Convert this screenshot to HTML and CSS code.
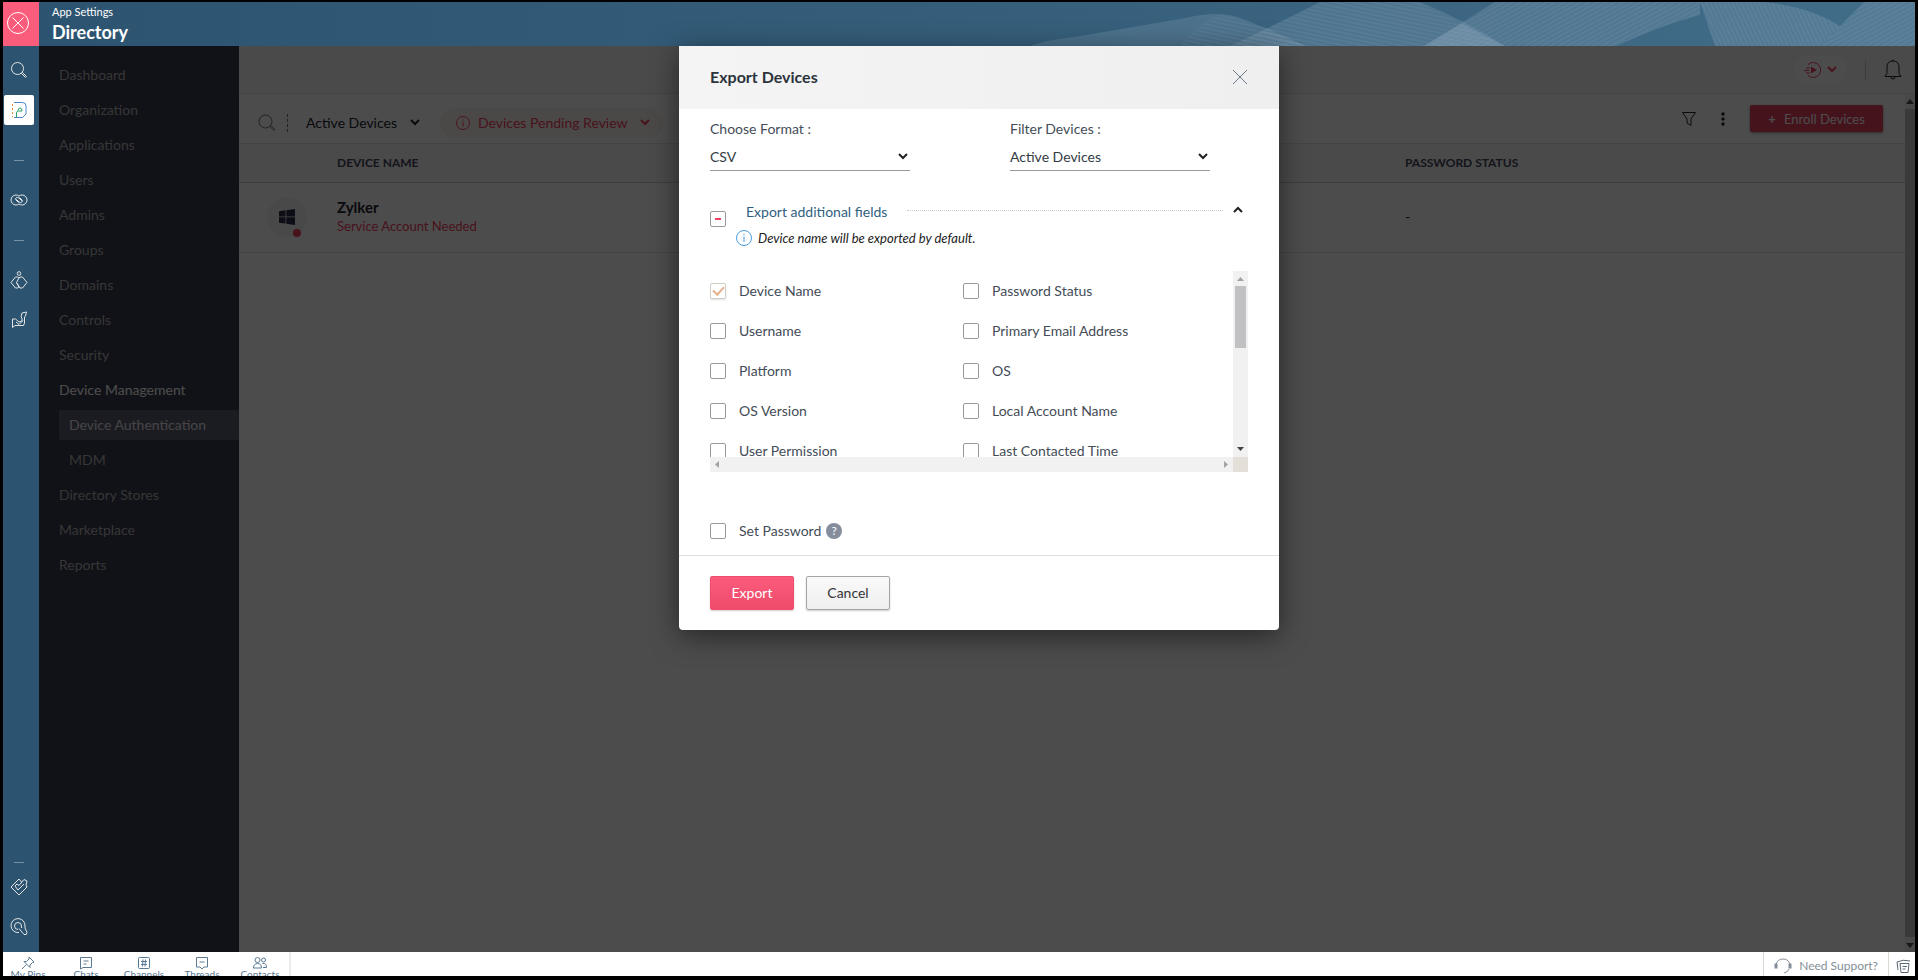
FILE: index.html
```
<!DOCTYPE html>
<html lang="en">

<head>
    <meta charset="UTF-8">
    <meta name="viewport" content="width=device-width, initial-scale=1.0">
    <title>Directory - App Settings</title>
    <link rel="stylesheet" href="styles.css">
</head>

<body>
    <header>
        <button id="close-settings" aria-label="Close settings">
            <svg width="24" height="24" viewBox="0 0 24 24"><circle cx="12" cy="12" r="10.5" /><path d="M6.5 6.5l11 11M17.5 6.5l-11 11" /></svg>
        </button>
        <div id="title">
            <span>App Settings</span>
            <h1>Directory</h1>
        </div>
        <svg id="waves" width="900" height="44" viewBox="0 0 900 44" aria-hidden="true">
            <defs>
                <pattern id="lines-a" width="4" height="4" patternUnits="userSpaceOnUse" patternTransform="rotate(12)">
                    <path d="M0 2h4" />
                </pattern>
                <pattern id="lines-b" width="4" height="4" patternUnits="userSpaceOnUse" patternTransform="rotate(-28)">
                    <path d="M0 2h4" />
                </pattern>
                <pattern id="lines-c" width="4" height="4" patternUnits="userSpaceOnUse" patternTransform="rotate(65)">
                    <path d="M0 2h4" />
                </pattern>
            </defs>
            <g class="wave">
                <path d="M15 44Q30 38 60 35L170 16Q205 8 225 16Q255 27 290 44z" />
                <path d="M215 44Q270 18 305 0H405Q450 18 490 44z" />
                <path d="M409 44L480 0H685V13Q650 22 601 44z" />
                <path d="M685 0H750Q795 5 825 24L805 44H700z" />
                <path d="M805 44L849 0H900V44z" />
                <path d="M409 44L447 22L490 44z" />
            </g>
            <path d="M165 44Q185 20 205 13Q255 22 290 44z" fill="url(#lines-a)" />
            <path d="M215 44L305 0H405L490 44z" fill="url(#lines-a)" />
            <path d="M409 44L480 0H685V13Q650 22 601 44z" fill="url(#lines-b)" />
            <path d="M685 0H750Q795 5 825 24L805 44H700z" fill="url(#lines-c)" />
            <path d="M805 44L849 0H900V44z" fill="url(#lines-b)" />
        </svg>
    </header>

    <div id="workspace">
        <nav id="rail" aria-label="Apps">
            <a href="#" aria-label="Search"><svg width="18" height="18" viewBox="0 0 18 18"><circle cx="7.500" cy="7.500" r="6" /><path d="M11.500 12.500l1-1 4 4-1 1z" /></svg></a>
            <a href="#" class="current" aria-label="Directory">
                <svg width="18" height="18" viewBox="0 0 18 18"><path class="blue" d="M4 1.500h8.500q3.500 0 3.500 3.500v8l-3.500 3.500H4" /><path class="orange" d="M2.500 3v13" /><path class="green" d="M6.500 16v-4q0-2 2-2H12V9q-.5-2-2-2T8 9.500" /></svg>
            </a>
            <hr>
            <a href="#" aria-label="Links"><svg width="18" height="18" viewBox="0 0 18 18"><path d="M9 5Q7.500 4 6 4a5 5 0 0 0 0 10q1.500 0 3-1M9 5q1.500-1 3-1a5 5 0 0 1 0 10q-1.500 0-3-1" /><path d="M8.500 11.500L6 9q-1-1.500.3-2.300T9 7l3 3M9.500 6.500L12 9q1 1.500-.3 2.300T9 11L6.500 8.500" /></svg></a>
            <hr>
            <a href="#" aria-label="People"><svg width="18" height="18" viewBox="0 0 18 18"><circle cx="9" cy="2.500" r="1.800" /><path d="M9 7L7.500 6h-2L1 11.500 5.500 17h2L9 16M9 7L6.500 11.500 10 17h2.500L17 11.500 12.500 6H10zM9 16l-2.500-4.500" /></svg></a>
            <a href="#" aria-label="Campaigns"><svg width="18" height="18" viewBox="0 0 18 18"><path d="M2.500 16.500V8h3l3.500 3 3-1V7l-1-1 1-4 4.500-1-1 4-1 1v6l-1 2.500H5zM6 11l3 2.500 4-4" /></svg></a>
            <hr class="push">
            <a href="#" aria-label="Tasks"><svg width="18" height="18" viewBox="0 0 18 18"><path d="M11.500 4L9 1 1 9l8 8 8-8-1-2 1-4-3-1.500-5 6-2-1.500-2 2L8 12l6-6" /></svg></a>
            <a href="#" aria-label="Zia search"><svg width="18" height="18" viewBox="0 0 18 18"><path d="M9 14.500A7 7 0 1 1 15 8v2l2 4.500q0 3-3 2l-5-6" /><path d="M8 11.500A3.500 3.500 0 1 1 11.500 8v2" /></svg></a>
        </nav>

        <nav id="sidebar" aria-label="Directory">
            <a href="#">Dashboard</a>
            <a href="#">Organization</a>
            <a href="#">Applications</a>
            <a href="#">Users</a>
            <a href="#">Admins</a>
            <a href="#">Groups</a>
            <a href="#">Domains</a>
            <a href="#">Controls</a>
            <a href="#">Security</a>
            <a href="#" class="open">Device Management</a>
            <a href="#" class="sub active">Device Authentication</a>
            <a href="#" class="sub">MDM</a>
            <a href="#">Directory Stores</a>
            <a href="#">Marketplace</a>
            <a href="#">Reports</a>
        </nav>

        <main>
            <div id="topbar">
                <button class="quick" aria-label="Quick start">
                    <svg width="18" height="18" viewBox="0 0 18 18"><path d="M4 3.500a7.500 7.500 0 1 1 0 11M2 7h4M0 9.500h5M2 12h4" /><path class="solid" d="M7 5.500l6 3.500-6 3.500z" /></svg>
                    <svg class="chevron" width="10" height="7" viewBox="0 0 10 7"><path d="M1 1l4 4 4-4" /></svg>
                </button>
                <span class="divider"></span>
                <button class="icon" aria-label="Notifications">
                    <svg width="18" height="21" viewBox="0 0 18 21"><path d="M9 .5v1.500M1 17.500l2-3V8q0-6 6-6t6 6v6.500l2 3zM7 18q0 2 2 2t2-2" /></svg>
                </button>
            </div>
            <div id="page">
                <div id="list">
                    <div id="toolbar">
                        <button class="icon search" aria-label="Search devices"><svg width="18" height="18" viewBox="0 0 18 18"><circle cx="7.500" cy="7.500" r="6.500" /><path d="M12 12.500l1-1 4 4-1 1z" /></svg></button>
                        <span class="dashes"></span>
                        <button class="view">Active Devices <svg class="chevron" width="10" height="7" viewBox="0 0 10 7"><path d="M1 1l4 4 4-4" /></svg></button>
                        <button class="pending">
                            <svg width="14" height="14" viewBox="0 0 14 14"><circle cx="7" cy="7" r="6.500" /><path d="M7 6v4.500M7 3.500v1.200" /></svg>
                            Devices Pending Review
                            <svg class="chevron" width="10" height="7" viewBox="0 0 10 7"><path d="M1 1l4 4 4-4" /></svg>
                        </button>
                        <div class="actions">
                            <button class="icon" aria-label="Filter"><svg width="14" height="14" viewBox="0 0 14 14"><path d="M.5 .5h13L9 7v6.500L5 11V7z" /></svg></button>
                            <button class="icon dots" aria-label="More"><svg width="4" height="14" viewBox="0 0 4 14"><circle cx="2" cy="2" r="1.700" /><circle cx="2" cy="7" r="1.700" /><circle cx="2" cy="12" r="1.700" /></svg></button>
                            <button class="enroll"><b>+</b> Enroll Devices</button>
                        </div>
                    </div>
                    <table>
                        <colgroup>
                            <col class="col-icon">
                            <col>
                            <col class="col-status">
                        </colgroup>
                        <thead>
                            <tr>
                                <th></th>
                                <th>DEVICE NAME</th>
                                <th>PASSWORD STATUS</th>
                            </tr>
                        </thead>
                        <tbody>
                            <tr>
                                <td>
                                    <span class="os">
                                        <svg width="16" height="16" viewBox="0 0 16 16"><path d="M0 2.200l6.500-.9v6.200H0zM7.300 1.200L16 0v7.500H7.300zM0 8.300h6.500v6.300L0 13.700zM7.300 8.300H16V16l-8.700-1.300z" /></svg>
                                    </span>
                                </td>
                                <td><strong>Zylker</strong><em>Service Account Needed</em></td>
                                <td>-</td>
                            </tr>
                        </tbody>
                    </table>
                </div>
                <div id="page-scroll" aria-hidden="true">
                    <svg width="10" height="15" viewBox="0 0 10 15"><path d="M1 10l4-5 4 5z" /></svg>
                    <span></span>
                    <svg width="10" height="15" viewBox="0 0 10 15"><path d="M1 6l4 5 4-5z" /></svg>
                </div>
            </div>
        </main>

        <div id="overlay">
            <form id="export" role="dialog" aria-labelledby="export-title">
                <div class="head">
                    <h2 id="export-title">Export Devices</h2>
                    <button type="button" aria-label="Close"><svg width="16" height="16" viewBox="0 0 16 16"><path d="M1 1l14 14M15 1L1 15" /></svg></button>
                </div>
                <div class="body">
                    <div class="selects">
                        <div class="field">
                            <label for="format">Choose Format :</label>
                            <select id="format"><option>CSV</option></select>
                            <svg class="chevron" width="10" height="7" viewBox="0 0 10 7"><path d="M1 1l4 4 4-4" /></svg>
                        </div>
                        <div class="field">
                            <label for="filter">Filter Devices :</label>
                            <select id="filter"><option>Active Devices</option></select>
                            <svg class="chevron" width="10" height="7" viewBox="0 0 10 7"><path d="M1 1l4 4 4-4" /></svg>
                        </div>
                    </div>

                    <div class="additional">
                        <input type="checkbox" id="all-fields" class="partial">
                        <div class="info">
                            <div class="line">
                                <label for="all-fields">Export additional fields</label>
                                <span class="rule"></span>
                                <button type="button" aria-label="Collapse"><svg class="chevron" width="10" height="7" viewBox="0 0 10 7"><path d="M1 6l4-4 4 4" /></svg></button>
                            </div>
                            <p><svg width="16" height="16" viewBox="0 0 16 16"><circle cx="8" cy="8" r="7.500" /><path d="M8 6.500v5.500M8 3.800v1.400" /></svg> Device name will be exported by default.</p>
                        </div>
                    </div>

                    <div class="scroller">
                        <div class="fields">
                            <label><input type="checkbox" checked disabled> Device Name</label>
                            <label><input type="checkbox"> Password Status</label>
                            <label><input type="checkbox"> Username</label>
                            <label><input type="checkbox"> Primary Email Address</label>
                            <label><input type="checkbox"> Platform</label>
                            <label><input type="checkbox"> OS</label>
                            <label><input type="checkbox"> OS Version</label>
                            <label><input type="checkbox"> Local Account Name</label>
                            <label><input type="checkbox"> User Permission</label>
                            <label><input type="checkbox"> Last Contacted Time</label>
                        </div>
                        <div class="bar-y" aria-hidden="true">
                            <svg width="9" height="15" viewBox="0 0 9 15"><path class="dim" d="M1 10l3.500-4L8 10z" /></svg>
                            <span></span>
                            <svg width="9" height="15" viewBox="0 0 9 15"><path d="M1 5l3.500 4L8 5z" /></svg>
                        </div>
                        <div class="bar-x" aria-hidden="true">
                            <svg width="15" height="9" viewBox="0 0 15 9"><path class="dim" d="M9 1L5 4.500 9 8z" /></svg>
                            <svg width="15" height="9" viewBox="0 0 15 9"><path class="dim" d="M6 1l4 3.500L6 8z" /></svg>
                        </div>
                        <div class="corner"></div>
                    </div>

                    <div class="password">
                        <label><input type="checkbox"> Set Password</label>
                        <button type="button" aria-label="Help">?</button>
                    </div>
                </div>
                <div class="foot">
                    <button type="submit" class="primary">Export</button>
                    <button type="button">Cancel</button>
                </div>
            </form>
        </div>
    </div>

    <footer>
        <nav aria-label="Chat">
            <a href="#"><svg width="14" height="14" viewBox="0 0 14 14"><path d="M8 1l5 5-1.500.5L9 9v2.500L3 5.500h2.500L8 3zM5.500 8.500L1 13" /></svg>My Pins</a>
            <a href="#"><svg width="14" height="14" viewBox="0 0 14 14"><path d="M1.500 1.500h11v10H4l-2.500 1.500zM4.500 5h5M4.500 8h3" /></svg>Chats</a>
            <a href="#"><svg width="14" height="14" viewBox="0 0 14 14"><rect x="1.500" y="1.500" width="11" height="11" rx="1" /><path d="M4 5.500h6M4 8.500h6M6 3.500l-.5 7M8.500 3.500l-.5 7" /></svg>Channels</a>
            <a href="#"><svg width="14" height="14" viewBox="0 0 14 14"><path d="M1.500 1.500h11v9.500H9L7 13l-2-2H1.500zM4.500 6h5" /></svg>Threads</a>
            <a href="#"><svg width="14" height="14" viewBox="0 0 14 14"><circle cx="4.500" cy="4" r="2.500" /><circle cx="10.500" cy="4" r="2" /><path d="M.5 12q0-4.500 4-4.500t4 4.500zM9.500 7.500q4-.5 4 4H10" /></svg>Contacts</a>
        </nav>
        <a href="#" class="support">
            <svg width="18" height="16" viewBox="0 0 18 16"><path d="M2 10V7q1-6 7-6t7 6v3M15 11q-1 3-5 4" /><path class="thick" d="M2 5.500v5M16 5.500v5" /></svg>
            Need Support?
        </a>
        <a href="#" class="notes" aria-label="Notes"><svg width="15" height="15" viewBox="0 0 15 15"><path d="M4 4.500h9l-1 9H5zM2 11L1 3q6-3 13-1M6.500 7.500h4.500M6.500 10h3" /></svg></a>
    </footer>
</body>

</html>
```
FILE: styles.css
```
:root {
    --blue: #2c5470;
    --red: #f2405f;
    --text: #444c57;
    --line: #e4e4e4;
}

* {
    box-sizing: border-box;
}

body {
    margin: 0;
    height: 100vh;
    padding: 2px 3px 4px;
    display: flex;
    flex-direction: column;
    background-color: #000;
    font-family: Lato, "Liberation Sans", sans-serif;
    font-size: 14px;
    line-height: 20px;
}

a {
    color: inherit;
    text-decoration: none;
}

button,
select,
input {
    margin: 0;
    font: inherit;
    color: inherit;
}

button {
    border: none;
    padding: 0;
    background: none;
    cursor: pointer;
}

svg {
    flex: none;
    display: block;
    fill: none;
    stroke: currentColor;
}

.chevron {
    stroke-width: 2;
}

/* header */

header {
    flex: none;
    display: flex;
    height: 44px;
    overflow: hidden;
    color: #fff;
    background: linear-gradient(to right, var(--blue), #365f7b 55%, #426d89);
}

#close-settings {
    width: 36px;
    flex: none;
    padding: 0 0 3px 3px;
    background-color: #fa5c7c;
}

#title {
    padding-left: 13px;
}

#title span {
    display: block;
    font-size: 11px;
    line-height: 20px;
}

#title h1 {
    margin: 0;
    font-size: 18px;
    line-height: 20px;
}

#waves {
    margin-left: auto;
    stroke: none;
}

#waves pattern {
    stroke: #9db4c4;
    stroke-opacity: 0.2;
}

.wave {
    fill: #8ca8ba;
    fill-opacity: 0.25;
}

/* workspace */

#workspace {
    position: relative;
    flex: 1;
    min-height: 0;
    display: flex;
}

#rail {
    width: 36px;
    flex: none;
    display: flex;
    flex-direction: column;
    align-items: center;
    padding: 4px 4px 5px 0;
    color: #e4e4e4;
    background-color: var(--blue);
}

#rail a {
    display: grid;
    place-items: center;
    width: 30px;
    height: 30px;
    margin: 5px 0;
}

#rail .current {
    border-radius: 2px;
    background-color: #fff;
}

#rail hr {
    width: 10px;
    margin: 20px 0 19px;
    border: none;
    border-top: 1px solid #7391a5;
}

#rail .current + hr {
    margin-top: 30px;
}

#rail hr.push {
    margin: auto 0 4px;
}

.blue {
    stroke: #4a86c5;
}

.orange {
    stroke: #e3873f;
    stroke-dasharray: 2 2;
}

.green {
    stroke: #25a465;
}

#sidebar {
    width: 200px;
    flex: none;
    display: flex;
    flex-direction: column;
    gap: 5px;
    padding: 14px 0 0 20px;
    line-height: 30px;
    color: #b4b4b4;
    background-color: #393c4d;
}

#sidebar .open {
    color: #fff;
}

#sidebar .sub {
    padding-left: 10px;
}

#sidebar .active {
    border-radius: 2px;
    color: #e6e6e6;
    background-color: #5c5c72;
}

main {
    flex: 1;
    min-width: 0;
    display: flex;
    flex-direction: column;
    color: #22222f;
    background-color: #fff;
}

#topbar {
    flex: none;
    height: 48px;
    display: flex;
    align-items: center;
    justify-content: flex-end;
    gap: 18px;
    padding-right: 13px;
    background-color: #f7f7f7;
    border-bottom: 1px solid var(--line);
}

.quick {
    width: 53px;
    height: 30px;
    display: flex;
    align-items: center;
    justify-content: center;
    gap: 5px;
    border-radius: 15px;
    color: var(--red);
    background-color: #fff;
}

.quick .solid {
    fill: currentColor;
    stroke: none;
}

.divider {
    width: 1px;
    height: 20px;
    background-color: #ccc;
}

#page {
    flex: 1;
    min-height: 0;
    display: flex;
}

#list {
    flex: 1;
}

#toolbar {
    height: 50px;
    display: flex;
    align-items: center;
    padding: 8px 22px 0 19px;
    border-bottom: 1px solid var(--line);
}

.search {
    color: #777;
}

.dashes {
    height: 18px;
    margin: 0 18px 0 11px;
    border-left: 1px dashed #777;
}

.view,
.pending {
    display: flex;
    align-items: center;
    height: 30px;
    white-space: nowrap;
}

.view {
    gap: 13px;
}

.pending {
    gap: 8px;
    margin-left: 20px;
    padding: 0 13px 0 16px;
    border-radius: 15px;
    color: var(--red);
    background-color: #fcf4ee;
}

.pending .chevron {
    margin-left: 4px;
}

.actions {
    display: flex;
    align-items: center;
    gap: 25px;
    margin: 0 0 8px auto;
}

.dots svg {
    fill: currentColor;
    stroke: none;
}

.enroll {
    width: 133px;
    height: 27px;
    border-radius: 2px;
    color: #fff;
    background-color: #e8405f;
    font-size: 13px;
    box-shadow: 0 1px 3px #0006;
}

.enroll b {
    margin-right: 5px;
}

table {
    width: 100%;
    table-layout: fixed;
    border-collapse: collapse;
}

.col-icon {
    width: 98px;
}

.col-status {
    width: 500px;
}

th,
td {
    padding: 0;
    text-align: left;
    border-bottom: 1px solid var(--line);
}

th {
    height: 38px;
    font-size: 12px;
    color: #464660;
    background-color: #f7f7f7;
    border-bottom-color: #d0d0d0;
}

td {
    height: 70px;
}

td strong,
td em {
    display: block;
    font-size: 15px;
    line-height: 19px;
}

td em {
    font-size: 13px;
    font-style: normal;
    color: var(--red);
}

.os {
    position: relative;
    display: grid;
    place-items: center;
    width: 40px;
    height: 40px;
    margin-left: 28px;
    border-radius: 50%;
    background-color: #f5f5f5;
}

.os svg {
    fill: #2c2c46;
    stroke: none;
}

.os::after {
    content: "";
    position: absolute;
    right: 6px;
    bottom: 0;
    width: 8px;
    height: 8px;
    border-radius: 50%;
    background-color: var(--red);
}

#page-scroll {
    width: 10px;
    display: flex;
    flex-direction: column;
    background-color: #f1f1f1;
}

#page-scroll span {
    flex: 1;
    background-color: #c1c1c1;
}

#page-scroll svg {
    fill: #505050;
    stroke: none;
}

/* export dialog */

#overlay {
    position: absolute;
    inset: 0 0 0 36px;
    display: flex;
    justify-content: center;
    align-items: flex-start;
    padding-left: 4px;
    background-color: rgba(0, 0, 0, 0.7);
}

#export {
    width: 600px;
    overflow: hidden;
    border-radius: 0 0 4px 4px;
    color: var(--text);
    background-color: #fff;
    box-shadow: 0 6px 28px rgba(0, 0, 0, 0.5);
}

.head {
    display: flex;
    align-items: center;
    justify-content: space-between;
    height: 63px;
    padding: 0 31px 2px;
    background: linear-gradient(to right, #f4f4f4, #efefef);
}

.head h2 {
    margin: 0;
    font-size: 16px;
    color: #2c333b;
}

.head button {
    color: #6b7a88;
}

.body {
    padding: 10px 31px 14px;
}

.selects {
    display: flex;
    gap: 100px;
}

.field {
    position: relative;
    width: 200px;
}

.field label {
    display: block;
}

.field select {
    display: block;
    width: 100%;
    height: 32px;
    padding: 4px 0 0;
    appearance: none;
    border: none;
    border-bottom: 1px solid #999;
    background: none;
    color: #333b44;
}

.field .chevron {
    position: absolute;
    right: 2px;
    bottom: 11px;
    color: #222;
    pointer-events: none;
}

input[type="checkbox"] {
    flex: none;
    width: 16px;
    height: 16px;
    display: grid;
    place-items: center;
    appearance: none;
    border: 1px solid #999;
    border-radius: 2px;
    background-color: #fff;
}

input[type="checkbox"]:disabled {
    border-color: #d3cdc6;
    box-shadow: 0 1px 2px #0002;
}

input[type="checkbox"]:checked::before {
    content: "";
    width: 9px;
    height: 5px;
    margin-bottom: 3px;
    border: solid #e5b08c;
    border-width: 0 0 2px 2px;
    transform: rotate(-48deg);
}

.partial::before {
    content: "";
    width: 6px;
    height: 2px;
    background-color: #f2405f;
}

.additional {
    display: flex;
    gap: 10px;
    margin-top: 31px;
}

.additional input {
    margin-top: 9px;
}

.info {
    flex: 1;
}

.line {
    display: flex;
    align-items: center;
    padding: 0 5px 0 10px;
    color: #2f5f80;
}

.line .rule {
    flex: 1;
    height: 5px;
    margin: 0 10px 0 20px;
    border-top: 1px dotted #ccc;
}

.line button {
    padding-bottom: 5px;
    color: #222;
}

.info p {
    display: flex;
    gap: 6px;
    align-items: center;
    margin: 6px 0 0;
    font-size: 13px;
    font-style: italic;
    color: #222;
}

.info p svg {
    color: #4a9bdc;
}

.scroller {
    display: grid;
    grid-template: 186px 15px / 1fr 15px;
    margin-top: 23px;
}

.fields {
    display: grid;
    grid-template-columns: 253px 1fr;
    grid-auto-rows: 40px;
    overflow: hidden;
}

.fields label,
.password label {
    display: flex;
    align-items: center;
    gap: 13px;
}

.bar-y,
.bar-x {
    display: flex;
    align-items: center;
    justify-content: space-between;
    background-color: #f1f1f1;
}

.bar-y {
    flex-direction: column;
}

.bar-y span {
    width: 11px;
    height: 62px;
    margin-bottom: auto;
    background-color: #c1c1c3;
}

.bar-y svg,
.bar-x svg {
    fill: #444;
    stroke: none;
}

.bar-y .dim,
.bar-x .dim {
    fill: #a3a3a3;
}

.corner {
    background-color: #e4dfd9;
}

.password {
    display: flex;
    align-items: center;
    gap: 5px;
    margin-top: 49px;
}

.password button {
    width: 16px;
    height: 16px;
    border-radius: 50%;
    font-size: 12px;
    line-height: 16px;
    color: #fff;
    background-color: #858d9c;
}

.foot {
    display: flex;
    gap: 12px;
    padding: 20px 31px;
    border-top: 1px solid #e2dfd9;
}

.foot button {
    width: 84px;
    height: 34px;
    border: 1px solid #a5a5a5;
    border-radius: 2px;
    color: #333;
    background: linear-gradient(#f9f9f9, #efefef);
    box-shadow: 0 1px 2px #0003;
}

.foot .primary {
    border-color: #f04d6d;
    color: #fff;
    background: linear-gradient(#fb5b7b, #ef4b6b);
}

/* bottom bar */

footer {
    flex: none;
    display: flex;
    height: 24px;
    overflow: hidden;
    color: #5b7a93;
    background-color: #fff;
}

footer nav {
    display: flex;
    margin: 0 auto 0 -4px;
    border-right: 2px solid #ececec;
}

footer nav a {
    width: 58px;
    display: flex;
    flex-direction: column;
    align-items: center;
    padding-top: 4px;
    font-size: 10px;
    line-height: 8px;
}

.support,
.notes {
    display: flex;
    align-items: center;
    padding-top: 4px;
    border-left: 1px solid #ddd9d3;
}

.support {
    gap: 7px;
    padding-left: 10px;
    padding-right: 10px;
    font-size: 12px;
    color: #848e99;
}

.support .thick {
    stroke-width: 3;
}

.notes {
    padding-left: 7px;
    padding-right: 4px;
    color: #5c6673;
}
```
